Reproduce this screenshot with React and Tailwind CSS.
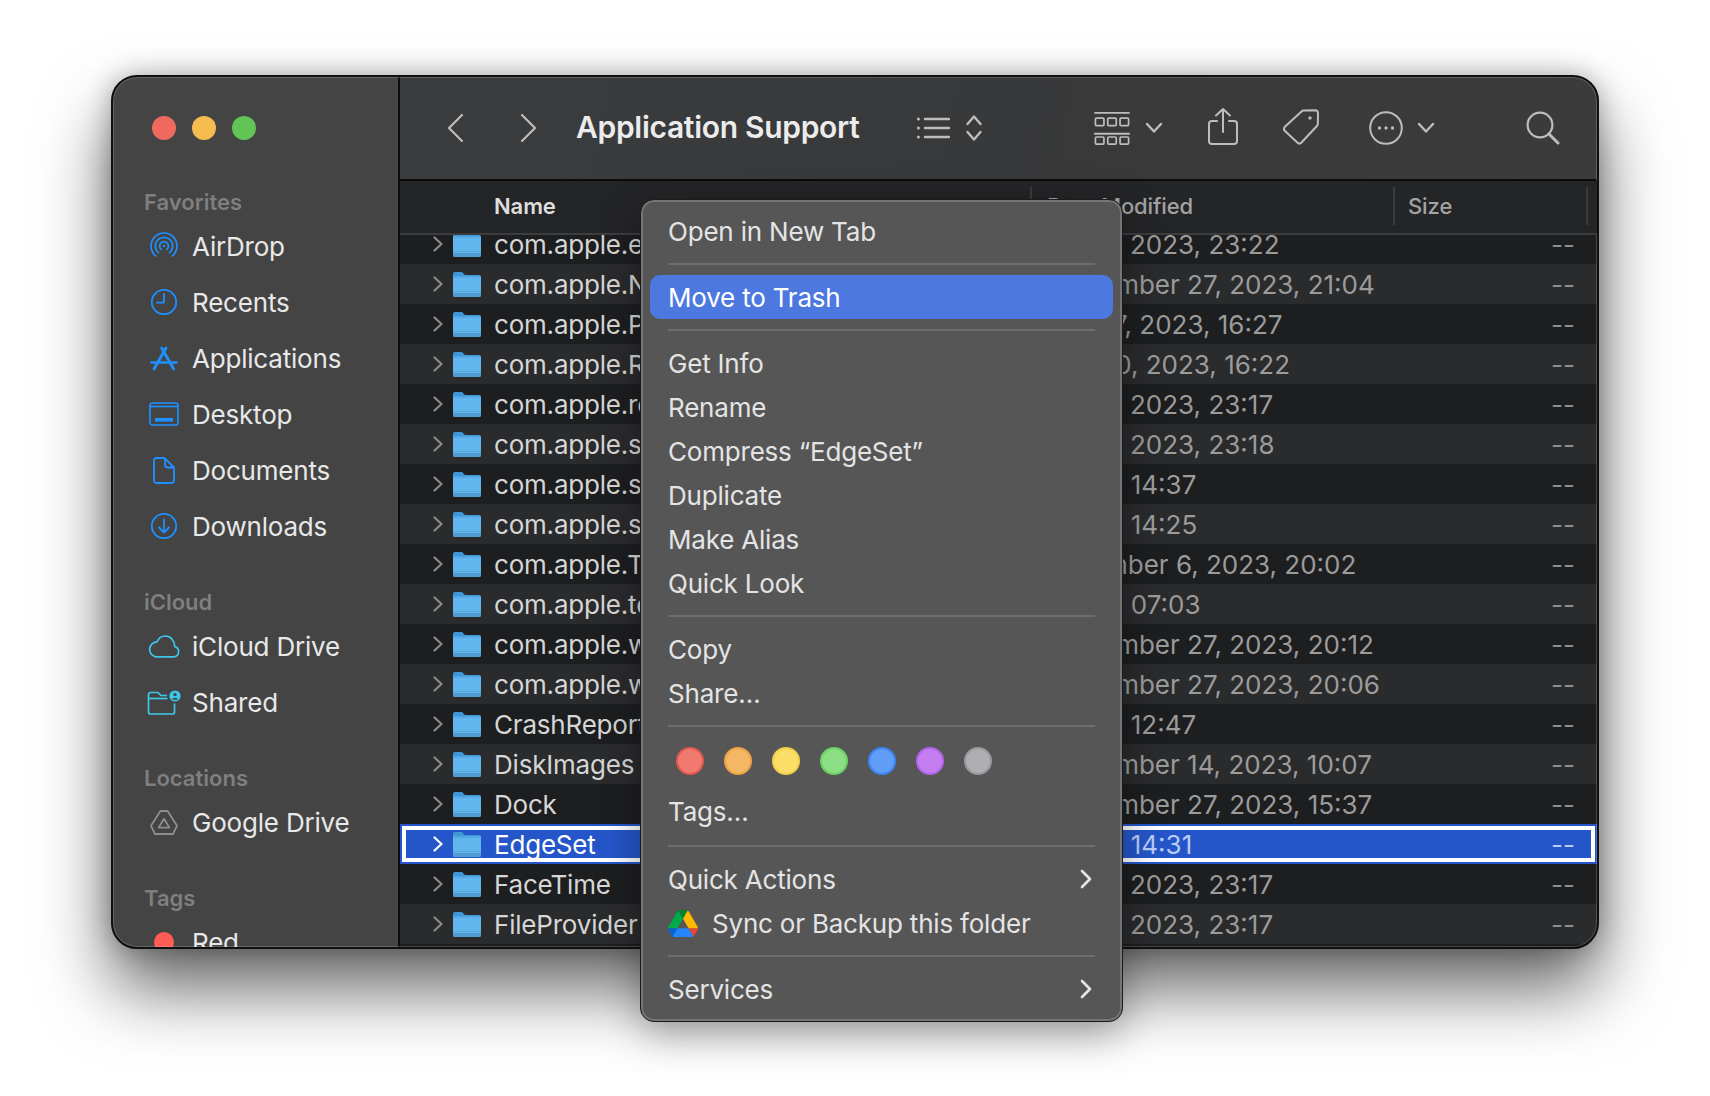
const font = { fontFamily: '"Inter","Noto Sans",sans-serif' };

function Folder() {
  return (
    <svg width="28" height="26" viewBox="0 0 28 26" className="shrink-0">
      <path d="M0 3a2 2 0 0 1 2-2h7l3 3h14a2 2 0 0 1 2 2v4H0z" fill="#3f98d6" />
      <path d="M0 7h28v17a2 2 0 0 1-2 2H2a2 2 0 0 1-2-2z" fill="#62b6ee" />
      <rect x="0" y="5" width="28" height="2" fill="#55a9e2" />
      <path d="M0 20h28v1H0z" fill="#58a8dd" />
      <path d="M0 22h28v2a2 2 0 0 1-2 2H2a2 2 0 0 1-2-2z" fill="#4f9dd2" />
    </svg>
  );
}

function RowChevron({ color }) {
  return (
    <svg width="10" height="16" viewBox="0 0 10 16" className="shrink-0">
      <path d="M1.5 1.5 8.5 8l-7 6.5" fill="none" stroke={color} strokeWidth="2.2" strokeLinecap="round" strokeLinejoin="round" />
    </svg>
  );
}

const rows = [
  ['com.apple.energy', 'May 1, 2023, 23:22'],
  ['com.apple.News', 'September 27, 2023, 21:04'],
  ['com.apple.Photos', 'June 7, 2023, 16:27'],
  ['com.apple.Reminders', 'May 10, 2023, 16:22'],
  ['com.apple.remote', 'May 1, 2023, 23:17'],
  ['com.apple.spotlight', 'May 1, 2023, 23:18'],
  ['com.apple.sharedfile', 'Today, 14:37', false, 'ml-[-3px]'],
  ['com.apple.siri', 'Today, 14:25', false, 'ml-[-3px]'],
  ['com.apple.TCC', 'November 6, 2023, 20:02', false, 'ml-[-4px]'],
  ['com.apple.touristd', 'Today, 07:03', false, 'ml-[-3px]'],
  ['com.apple.wallpaper', 'September 27, 2023, 20:12'],
  ['com.apple.weather', 'September 27, 2023, 20:06'],
  ['CrashReporter', 'Today, 12:47', false, 'ml-[-3px]'],
  ['DiskImages', 'September 14, 2023, 10:07'],
  ['Dock', 'September 27, 2023, 15:37'],
  ['EdgeSet', 'Today, 14:31', true, 'ml-[-3px]'],
  ['FaceTime', 'May 1, 2023, 23:17'],
  ['FileProvider', 'May 1, 2023, 23:17'],
  ['Fonts', 'May 1, 2023, 23:17'],
];

function Row({ name, date, selected, index, nudge }) {
  const bg = selected
    ? 'bg-[#2556c9] shadow-[inset_0_0_0_2px_#2556c9,inset_0_0_0_6px_#ffffff]'
    : index % 2 === 0
    ? 'bg-[#1d1e20]'
    : 'bg-[#2a2b2d]';
  return (
    <div className={`h-[40px] shrink-0 flex items-center text-[26px] ${bg}`}>
      <div className="w-[43px] shrink-0 flex justify-end">
        <RowChevron color={selected ? '#ffffff' : '#8b8b8b'} />
      </div>
      <div className="w-[10px] shrink-0" />
      <Folder />
      <div className={`ml-[13px] w-[551px] shrink-0 tracking-[-0.2px] whitespace-nowrap overflow-hidden ${selected ? 'text-white' : 'text-[#d6d6d6]'}`}>{name}</div>
      <div className={`flex-1 whitespace-nowrap ${nudge || ''} ${selected ? 'text-[#b9cdf6]' : 'text-[#9b9b9b]'}`}>{date}</div>
      <div className={`mr-[22px] ${selected ? 'text-[#b9cdf6]' : 'text-[#8e8e8e]'}`}>--</div>
    </div>
  );
}

const B = '#1e90ff';
const C = '#3cc8ec';

const Airdrop = () => (
  <svg width="28" height="28" viewBox="0 0 28 28" fill="none" stroke={B} strokeWidth="1.7" strokeLinecap="round">
    <path d="M5.64 23.96A13 13 0 1 1 22.36 23.96" />
    <path d="M8.4 20.66A8.7 8.7 0 1 1 19.6 20.66" />
    <path d="M11.17 17.37A4.4 4.4 0 1 1 16.83 17.37" />
    <circle cx="14" cy="14" r="1.2" fill={B} stroke="none" />
  </svg>
);
const Clock = () => (
  <svg width="28" height="28" viewBox="0 0 28 28" fill="none" stroke={B} strokeWidth="1.8" strokeLinecap="round" strokeLinejoin="round">
    <circle cx="14" cy="14" r="12.2" />
    <path d="M14 6v8.6H6.8" />
  </svg>
);
const AppsIcon = () => (
  <svg width="28" height="25" viewBox="0 0 28 25" fill="none" stroke={B} strokeLinecap="round">
    <path d="M11.7 2 23.6 23" strokeWidth="2.8" />
    <path d="M16 2 4 23" strokeWidth="2.8" />
    <path d="M1.5 16.5h25" strokeWidth="2.6" />
  </svg>
);
const DesktopIcon = () => (
  <svg width="30" height="24" viewBox="0 0 30 24" fill="none" stroke={B} strokeWidth="1.7">
    <rect x="1" y="1" width="28" height="22" rx="2.5" />
    <path d="M1 4.5h28" />
    <rect x="6" y="16" width="18" height="3.6" fill={B} stroke="none" />
  </svg>
);
const DocIcon = () => (
  <svg width="22" height="27" viewBox="0 0 22 27" fill="none" stroke={B} strokeWidth="1.8" strokeLinejoin="round">
    <path d="M3 1h8.5L21 10.5V23a3 3 0 0 1-2.4 3H3.4A2.6 2.6 0 0 1 1 23V3.4A2.4 2.4 0 0 1 3 1z" />
    <path d="M12 1.2V7.5a3 3 0 0 0 3 3h5.8" />
  </svg>
);
const DownIcon = () => (
  <svg width="28" height="28" viewBox="0 0 28 28" fill="none" stroke={B} strokeWidth="1.8" strokeLinecap="round" strokeLinejoin="round">
    <circle cx="14" cy="14" r="12.2" />
    <path d="M14 7.5v12.5M9 15.5l5 5 5-5" />
  </svg>
);
const CloudIcon = () => (
  <svg width="32" height="23" viewBox="0 0 32 23" fill="none" stroke={C} strokeWidth="1.7" strokeLinejoin="round">
    <path d="M7.5 21.8h18a5.2 5.2 0 0 0 1.3-10.2C26.5 5.5 22.5 1 17.5 1c-3.8 0-7 2.4-8.4 5.8A7.6 7.6 0 0 0 7.5 21.8z" />
  </svg>
);
const SharedIcon = () => (
  <svg width="34" height="25" viewBox="0 0 34 25" fill="none" stroke={C} strokeWidth="1.7" strokeLinejoin="round">
    <path d="M20 5.5H14l-3-3H3.5A2 2 0 0 0 1.5 4.5v17.5a2 2 0 0 0 2 2h22a2 2 0 0 0 2-2V13.5" />
    <path d="M1.5 8.5h19" />
    <circle cx="28" cy="6" r="5.6" fill={C} stroke="none" />
    <circle cx="28" cy="4.6" r="1.7" fill="#444444" stroke="none" />
    <path d="M24.8 9.8a3.4 3 0 0 1 6.4 0z" fill="#444444" stroke="none" />
  </svg>
);
const DriveIcon = () => (
  <svg width="28" height="25" viewBox="0 0 28 25" fill="none" stroke="#8d8d8d" strokeWidth="1.8" strokeLinejoin="round">
    <path d="M10.4 1h7.2L27 15.8 23 24H5L1 15.8z" />
    <path d="M14 8.8 19.4 17.6H8.6z" />
  </svg>
);
const RedDot = () => <div className="w-[20px] h-[20px] rounded-full bg-[#ff5c56]" />;

function SideHead({ children, first }) {
  return (
    <div className={`h-[32px] shrink-0 ml-[-1px] flex items-center text-[22px] font-semibold text-[#7f7f7f] ${first ? 'mt-[46px]' : 'mt-[32px]'}`}>
      {children}
    </div>
  );
}
function SideItem({ icon, children }) {
  return (
    <div className="h-[56px] shrink-0 flex items-center text-[26px] tracking-[-0.2px] text-[#e8e8e8]">
      <div className="w-[38px] flex justify-center shrink-0">{icon}</div>
      <div className="ml-[9px] whitespace-nowrap">{children}</div>
    </div>
  );
}

const T = '#bdbdbd';
const Tool = ({ w, h, ml, mb, children, vb }) => (
  <svg width={w} height={h} viewBox={vb || `0 0 ${w} ${h}`} fill="none" stroke={T} strokeWidth="2" strokeLinecap="round" strokeLinejoin="round" className="shrink-0" style={{ marginLeft: ml, marginBottom: mb }}>
    {children}
  </svg>
);

function Toolbar() {
  return (
    <div className="h-[104px] shrink-0 flex items-center bg-[linear-gradient(100deg,#3a3c3e,#38393a_50%,#3b3b3c)] border-b-2 border-[#0c0c0c]">
      <Tool w={18} h={30} ml={46}><path d="M16 2 3 15l13 13" strokeWidth="2.2" /></Tool>
      <Tool w={18} h={30} ml={56}><path d="M2 2l13 13L2 28" strokeWidth="2.2" /></Tool>
      <div className="ml-[38px] mb-[2px] w-[340px] shrink-0 text-[30px] font-semibold tracking-[-0.3px] text-[#ececec] whitespace-nowrap">Application Support</div>
      <Tool w={34} h={24}>
        <path d="M9 3h24M9 12h24M9 21h24" strokeWidth="2.4" />
        <circle cx="2.4" cy="3" r="1.5" fill={T} stroke="none" />
        <circle cx="2.4" cy="12" r="1.5" fill={T} stroke="none" />
        <circle cx="2.4" cy="21" r="1.5" fill={T} stroke="none" />
      </Tool>
      <Tool w={18} h={28} ml={15}><path d="M2.5 10 9 2.5l6.5 7.5M2.5 18 9 25.5l6.5-7.5" strokeWidth="2.4" /></Tool>
      <Tool w={36} h={36} ml={111} vb="0 0 38 36">
        <path d="M1 2h36M1 24h36" strokeWidth="2" />
        <rect x="1.5" y="7.5" width="9" height="8" rx="1" strokeWidth="1.8" />
        <rect x="14.5" y="7.5" width="9" height="8" rx="1" strokeWidth="1.8" />
        <rect x="27.5" y="7.5" width="9" height="8" rx="1" strokeWidth="1.8" />
        <rect x="1.5" y="27.5" width="9" height="7.5" rx="1" strokeWidth="1.8" />
        <rect x="14.5" y="27.5" width="9" height="7.5" rx="1" strokeWidth="1.8" />
        <rect x="27.5" y="27.5" width="9" height="7.5" rx="1" strokeWidth="1.8" />
      </Tool>
      <Tool w={18} h={12} ml={15}><path d="M2 2l7 7.5L16 2" strokeWidth="2.4" /></Tool>
      <Tool w={30} h={38} ml={45} mb={4}>
        <path d="M15 25V2M8 8.5 15 2l7 6.5" />
        <path d="M9 14H4a3 3 0 0 0-3 3v17a3 3 0 0 0 3 3h22a3 3 0 0 0 3-3V17a3 3 0 0 0-3-3h-5" />
      </Tool>
      <Tool w={38} h={38} ml={44} mb={2}>
        <path d="M21.5 2.5 33 2.2a3 3 0 0 1 3 3L35.8 16a3 3 0 0 1-.9 2L19.5 34.5a3 3 0 0 1-4.2.1L3 23a3 3 0 0 1-.1-4.2L19.5 3.4a3 3 0 0 1 2-.9z" />
        <circle cx="28" cy="10" r="1.7" fill={T} stroke="none" />
      </Tool>
      <Tool w={34} h={34} ml={49}>
        <circle cx="17" cy="17" r="15.8" />
        <circle cx="10.5" cy="17" r="1.7" fill={T} stroke="none" />
        <circle cx="17" cy="17" r="1.7" fill={T} stroke="none" />
        <circle cx="23.5" cy="17" r="1.7" fill={T} stroke="none" />
      </Tool>
      <Tool w={18} h={12} ml={14}><path d="M2 2l7 7.5L16 2" strokeWidth="2.4" /></Tool>
      <Tool w={34} h={34} ml={91}>
        <circle cx="14" cy="14" r="12.4" strokeWidth="2.2" />
        <path d="M23 23l9 9" strokeWidth="3" />
      </Tool>
    </div>
  );
}

function TableHeader() {
  return (
    <div className="h-[54px] shrink-0 relative z-10 flex items-center pb-[2px] bg-[#242527] border-b-2 border-[#3c3d3f] text-[22px] tracking-[-0.1px]">
      <div className="ml-[94px] w-[536px] shrink-0 font-semibold text-[#dedede]">Name</div>
      <div className="w-[2px] h-[38px] bg-[#3a3b3d] shrink-0" />
      <div className="ml-[15px] w-[346px] shrink-0 font-medium text-[#a3a3a3]">Date Modified</div>
      <div className="w-[2px] h-[38px] bg-[#3a3b3d] shrink-0" />
      <div className="ml-[13px] w-[178px] shrink-0 font-medium text-[#a3a3a3]">Size</div>
      <div className="w-[2px] h-[38px] bg-[#3a3b3d] shrink-0" />
    </div>
  );
}

const Sep = () => (
  <div className="h-[22px] flex items-center px-[27px]">
    <div className="h-[2px] w-full bg-[#6d6d6d]" />
  </div>
);
const MI = ({ children, active, right, icon, extra }) => (
  <div className={`h-[44px] flex items-center mx-[9px] px-[18px] rounded-[10px] ${active ? 'bg-[#4c78e0] text-white' : ''} ${extra || ''}`}>
    {icon}
    <span className="whitespace-nowrap">{children}</span>
    {right && (
      <svg width="14" height="22" viewBox="0 0 14 22" className="ml-auto mr-[2px]" fill="none" stroke="#e6e6e6" strokeWidth="2.6" strokeLinecap="round" strokeLinejoin="round">
        <path d="M3 3l8 8-8 8" />
      </svg>
    )}
  </div>
);
const tagDots = [
  'bg-[#f17a70] border-[#e2594f]',
  'bg-[#f4b763] border-[#eda345]',
  'bg-[#fbde68] border-[#f6cf4a]',
  'bg-[#8bde83] border-[#6bd163]',
  'bg-[#5f9df7] border-[#3d85f3]',
  'bg-[#c57df2] border-[#b265eb]',
  'bg-[#afafb3] border-[#98989c]',
];
const DriveLogo = () => (
  <svg width="30" height="27" viewBox="0 0 87.3 78" className="mr-[14px] shrink-0">
    <path d="m6.6 66.85 3.85 6.65c.8 1.4 1.95 2.5 3.3 3.3l13.75-23.8h-27.5c0 1.55.4 3.1 1.2 4.5z" fill="#0066da" />
    <path d="m43.65 25-13.75-23.8c-1.35.8-2.5 1.9-3.3 3.3l-25.4 44a9.06 9.06 0 0 0 -1.2 4.5h27.5z" fill="#00ac47" />
    <path d="m73.55 76.8c1.35-.8 2.5-1.9 3.3-3.3l1.6-2.75 7.65-13.25c.8-1.4 1.2-2.95 1.2-4.5h-27.502l5.852 11.5z" fill="#ea4335" />
    <path d="m43.65 25 13.75-23.8c-1.35-.8-2.9-1.2-4.5-1.2h-18.5c-1.6 0-3.15.45-4.5 1.2z" fill="#00832d" />
    <path d="m59.8 53h-32.3l-13.75 23.8c1.35.8 2.9 1.2 4.5 1.2h50.8c1.6 0 3.15-.45 4.5-1.2z" fill="#2684fc" />
    <path d="m73.4 26.5-12.7-22c-.8-1.4-1.95-2.5-3.3-3.3l-13.75 23.8 16.15 28h27.45c0-1.55-.4-3.1-1.2-4.5z" fill="#ffba00" />
  </svg>
);

function Menu() {
  return (
    <div className="absolute z-20 left-[640px] top-[199px] w-[483px] h-[823px] rounded-[14px] bg-[#565656] border border-[#1b1b1b] shadow-[inset_0_0_0_2px_#757575,0_12px_40px_rgba(0,0,0,0.35)] pt-[9px] text-[26px] tracking-[-0.2px] text-[#e4e4e4]">
      <MI>Open in New Tab</MI>
      <Sep />
      <MI active>Move to Trash</MI>
      <Sep />
      <MI>Get Info</MI>
      <MI>Rename</MI>
      <MI>Compress “EdgeSet”</MI>
      <MI>Duplicate</MI>
      <MI>Make Alias</MI>
      <MI>Quick Look</MI>
      <Sep />
      <MI>Copy</MI>
      <MI>Share…</MI>
      <Sep />
      <div className="h-[52px] pb-[4px] flex items-center gap-[20px] pl-[35px]">
        {tagDots.map((c) => (
          <div key={c} className={`w-[28px] h-[28px] rounded-full border-2 ${c}`} />
        ))}
      </div>
      <MI extra="mb-[2px]">Tags…</MI>
      <Sep />
      <MI right>Quick Actions</MI>
      <MI icon={<DriveLogo />}>Sync or Backup this folder</MI>
      <Sep />
      <MI right>Services</MI>
    </div>
  );
}

export default function App() {
  return (
    <div className="relative w-[1710px] h-[1096px] overflow-hidden bg-white pl-[111px] pt-[75px]" style={font}>
      <div className="relative w-[1488px] h-[874px] rounded-[26px] border-2 border-[#101010] shadow-[0_40px_70px_rgba(0,0,0,0.6),0_0_26px_rgba(0,0,0,0.28)] overflow-hidden flex bg-[#1d1e20]">
        <div className="w-[285px] shrink-0 bg-[#444444] pl-[32px] flex flex-col overflow-hidden">
          <div className="mt-[39px] flex gap-[16px] pl-[7px]">
            <div className="w-[24px] h-[24px] rounded-full bg-[#ee6a5f]" />
            <div className="w-[24px] h-[24px] rounded-full bg-[#f5bd4f]" />
            <div className="w-[24px] h-[24px] rounded-full bg-[#61c454]" />
          </div>
          <SideHead first>Favorites</SideHead>
          <SideItem icon={<Airdrop />}>AirDrop</SideItem>
          <SideItem icon={<Clock />}>Recents</SideItem>
          <SideItem icon={<AppsIcon />}>Applications</SideItem>
          <SideItem icon={<DesktopIcon />}>Desktop</SideItem>
          <SideItem icon={<DocIcon />}>Documents</SideItem>
          <SideItem icon={<DownIcon />}>Downloads</SideItem>
          <SideHead>iCloud</SideHead>
          <SideItem icon={<CloudIcon />}>iCloud Drive</SideItem>
          <SideItem icon={<SharedIcon />}>Shared</SideItem>
          <SideHead>Locations</SideHead>
          <SideItem icon={<DriveIcon />}>Google Drive</SideItem>
          <SideHead>Tags</SideHead>
          <SideItem icon={<RedDot />}>Red</SideItem>
        </div>
        <div className="flex-1 min-w-0 flex flex-col border-l-2 border-[#0c0c0c]">
          <Toolbar />
          <TableHeader />
          <div className="flex-1 min-h-0 overflow-hidden flex flex-col">
            <div className="mt-[-11px] flex flex-col">
              {rows.map(([name, date, sel, nudge], i) => (
                <Row key={name} name={name} date={date} selected={sel} nudge={nudge} index={i} />
              ))}
            </div>
          </div>
        </div>
        <div className="absolute inset-0 rounded-[24px] shadow-[inset_0_0_0_1px_rgba(255,255,255,0.18)] pointer-events-none" />
      </div>
      <Menu />
    </div>
  );
}
